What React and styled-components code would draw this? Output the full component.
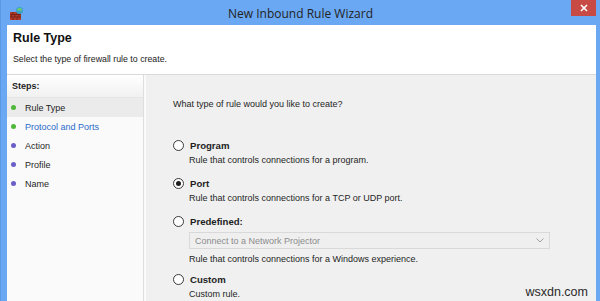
import React from "react";
import styled, { createGlobalStyle } from "styled-components";

const Global = createGlobalStyle`
  html, body {
    margin: 0;
    padding: 0;
    background: #6aa8f4;
  }
  #root {
    width: 600px;
    height: 301px;
    overflow: hidden;
  }
`;

const Frame = styled.div`
  position: relative;
  width: 600px;
  height: 301px;
  background: #6aa8f4;
  display: flex;
  flex-direction: column;
  font-family: "Liberation Sans", Arial, sans-serif;
  color: #1e1e1e;
  box-sizing: border-box;
  border-left: 1px solid #5c98e6;
`;

const TitleBar = styled.div`
  height: 25px;
  flex: none;
  display: flex;
  align-items: flex-start;
  position: relative;
`;

const AppIcon = styled.div`
  width: 16px;
  height: 16px;
  margin: 6px 0 0 8px;
`;

const Title = styled.div`
  position: absolute;
  left: 0;
  right: 0;
  top: 5px;
  text-align: center;
  font-family: "Open Sans", "Liberation Sans", sans-serif;
  font-size: 12px;
  color: #232323;
`;

const CloseButton = styled.div`
  margin-left: auto;
  margin-right: 4px;
  width: 25px;
  height: 16px;
  background: #c74a45;
  color: #fff;
  display: flex;
  align-items: center;
  justify-content: center;
  position: relative;
  z-index: 1;
`;

const Client = styled.div`
  flex: 1;
  margin: 0 4px 0 6px;
  display: flex;
  flex-direction: column;
  background: #f0f0f0;
  min-height: 0;
`;

const Header = styled.div`
  height: 50px;
  flex: none;
  background: #fff;
  border-bottom: 1px solid #dadada;
  padding: 5px 0 0 6px;
  box-sizing: border-box;
`;

const HeaderTitle = styled.div`
  font-size: 12.5px;
  font-weight: bold;
  color: #111;
  margin-top: 1px;
`;

const HeaderSub = styled.div`
  font-size: 8.8px;
  margin-top: 9px;
  color: #222;
`;

const Body = styled.div`
  flex: 1;
  display: flex;
  min-height: 0;
`;

const StepsPane = styled.div`
  width: 136px;
  flex: none;
  background: #fafafa;
  border-right: 1px solid #dedede;
  box-shadow: 2px 0 0 #fafafa;
  display: flex;
  flex-direction: column;
`;

const StepsHead = styled.div`
  height: 23px;
  font-size: 9px;
  font-weight: bold;
  padding-left: 5px;
  display: flex;
  align-items: center;
  background: linear-gradient(#ffffff, #f1f1f1);
  border-bottom: 1px solid #e6e6e6;
  box-sizing: border-box;
  padding-bottom: 1px;
`;

const Step = styled.div`
  height: 19px;
  display: flex;
  align-items: center;
  padding-left: 4px;
  font-size: 9px;
  background: ${(p) => (p.$current ? "#ebebeb" : "transparent")};
  color: ${(p) => (p.$link ? "#2a6bc9" : "#1e1e1e")};
`;

const Dot = styled.span`
  width: 5px;
  height: 5px;
  border-radius: 50%;
  background: ${(p) => (p.$done ? "#4fb83a" : "#6a5fc8")};
  margin-right: 9px;
`;

const Content = styled.div`
  flex: 1;
  padding: 24px 0 0 29px;
  display: flex;
  flex-direction: column;
`;

const Question = styled.div`
  font-size: 9px;
  margin-bottom: 29px;
`;

const Option = styled.div`
  display: flex;
  flex-direction: column;
  margin-bottom: ${(p) => p.$gap}px;
`;

const OptionRow = styled.div`
  display: flex;
  align-items: center;
  height: 14px;
`;

const Radio = styled.span`
  width: 9px;
  height: 9px;
  border-radius: 50%;
  border: 1px solid #3a3a3a;
  background: #fff;
  box-sizing: content-box;
  display: flex;
  align-items: center;
  justify-content: center;
  margin-right: 6px;
  &::after {
    content: "";
    width: 5px;
    height: 5px;
    border-radius: 50%;
    background: ${(p) => (p.$checked ? "#1e1e1e" : "transparent")};
  }
`;

const OptionLabel = styled.span`
  font-size: 9.6px;
  font-weight: bold;
`;

const OptionDesc = styled.div`
  font-size: 9px;
  margin-left: 16px;
  margin-top: 3px;
`;

const Select = styled.div`
  margin: 4px 0 2px 16px;
  width: 361px;
  height: 17px;
  border: 1px solid #d9d9d9;
  background: #efefef;
  box-sizing: border-box;
  display: flex;
  align-items: center;
  padding: 0 5px;
  font-size: 9px;
  color: #8c8c8c;
  justify-content: space-between;
`;

const Watermark = styled.div`
  position: absolute;
  right: 12px;
  bottom: 2px;
  font-size: 12.5px;
  color: #2a2a2a;
`;

const FirewallIcon = () => (
  <svg width="16" height="16" viewBox="0 0 16 16">
    <rect x="1" y="6" width="11" height="8" fill="#b23a2a" />
    <path d="M1 8.5h11M1 11h11M4 6v2.5M8 6v2.5M2.5 8.5V11M6 8.5V11M10 8.5V11M4 11v3M8 11v3" stroke="#6e1f15" strokeWidth="0.8" />
    <circle cx="10.5" cy="4.5" r="3.5" fill="#3aa0c8" />
    <path d="M8 4.5a2.5 2.5 0 0 1 5 0" fill="#6fd06a" />
  </svg>
);

const steps = [
  { name: "Rule Type", done: true, current: true },
  { name: "Protocol and Ports", done: true, link: true },
  { name: "Action" },
  { name: "Profile" },
  { name: "Name" },
];

export default function App() {
  return (
    <>
      <Global />
      <Frame>
        <TitleBar>
          <AppIcon>
            <FirewallIcon />
          </AppIcon>
          <Title>New Inbound Rule Wizard</Title>
          <CloseButton>
            <svg width="8" height="8" viewBox="0 0 8 8">
              <path d="M1 1l6 6M7 1L1 7" stroke="#fff" strokeWidth="1.6" />
            </svg>
          </CloseButton>
        </TitleBar>
        <Client>
          <Header>
            <HeaderTitle>Rule Type</HeaderTitle>
            <HeaderSub>Select the type of firewall rule to create.</HeaderSub>
          </Header>
          <Body>
            <StepsPane>
              <StepsHead>Steps:</StepsHead>
              {steps.map((s) => (
                <Step key={s.name} $current={s.current} $link={s.link}>
                  <Dot $done={s.done} />
                  {s.name}
                </Step>
              ))}
            </StepsPane>
            <Content>
              <Question>What type of rule would you like to create?</Question>
              <Option $gap={11}>
                <OptionRow>
                  <Radio />
                  <OptionLabel>Program</OptionLabel>
                </OptionRow>
                <OptionDesc>Rule that controls connections for a program.</OptionDesc>
              </Option>
              <Option $gap={11}>
                <OptionRow>
                  <Radio $checked />
                  <OptionLabel>Port</OptionLabel>
                </OptionRow>
                <OptionDesc>Rule that controls connections for a TCP or UDP port.</OptionDesc>
              </Option>
              <Option $gap={8}>
                <OptionRow>
                  <Radio />
                  <OptionLabel>Predefined:</OptionLabel>
                </OptionRow>
                <Select>
                  <span>Connect to a Network Projector</span>
                  <svg width="8" height="5" viewBox="0 0 8 5">
                    <path d="M0.5 0.5L4 4l3.5-3.5" stroke="#a0a0a0" fill="none" />
                  </svg>
                </Select>
                <OptionDesc>Rule that controls connections for a Windows experience.</OptionDesc>
              </Option>
              <Option $gap={0}>
                <OptionRow>
                  <Radio />
                  <OptionLabel>Custom</OptionLabel>
                </OptionRow>
                <OptionDesc>Custom rule.</OptionDesc>
              </Option>
            </Content>
          </Body>
        </Client>
        <Watermark>wsxdn.com</Watermark>
      </Frame>
    </>
  );
}
